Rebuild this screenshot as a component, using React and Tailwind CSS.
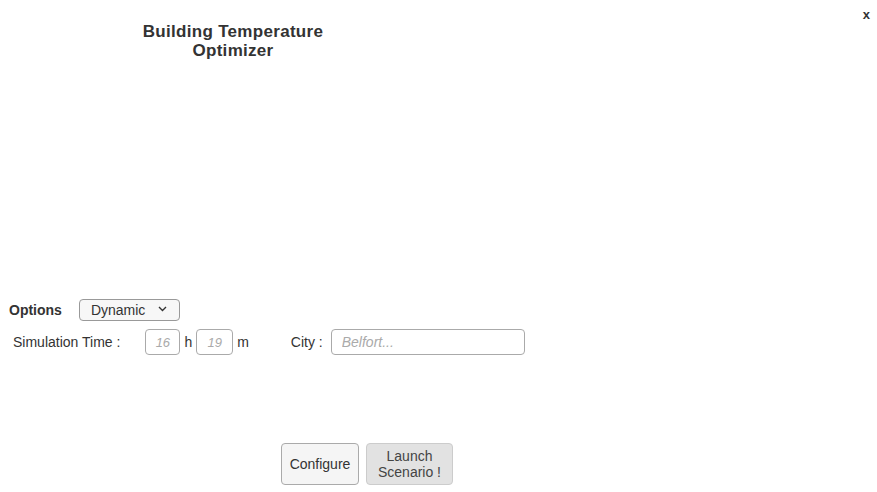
import React, { useState } from 'react';

const App = () => {
    const [mode, setMode] = useState('Dynamic');

    return (
        <div className="relative w-[877px] h-[492px] bg-white text-[#333] font-['Liberation_Sans',Arial,sans-serif]">
            <button className="absolute right-[7px] top-[5px] text-[13px] font-bold text-[#333]">x</button>

            <div className="w-[466px] pt-[22px] text-center text-[17px] tracking-[0.3px] font-bold leading-[19px] text-[#333]">
                <div>Building Temperature</div>
                <div>Optimizer</div>
            </div>

            <div className="mt-[238px] pl-[9px]">
                <div className="flex items-center h-[24px]">
                    <span className="text-[14px] font-bold">Options</span>
                    <div className="ml-[17px] relative">
                        <select
                            value={mode}
                            onChange={(e) => setMode(e.target.value)}
                            className="appearance-none w-[101px] h-[22px] pl-[11px] border border-[#999] rounded-[4px] bg-[#f7f7f7] text-[14px] text-[#333]"
                        >
                            <option>Dynamic</option>
                            <option>Static</option>
                        </select>
                        <svg className="absolute right-[13px] top-[8px] pointer-events-none" width="9" height="6" viewBox="0 0 9 6">
                            <path d="M1 1l3.5 3.5L8 1" fill="none" stroke="#333" strokeWidth="1.4" />
                        </svg>
                    </div>
                </div>

                <div className="flex items-center mt-[6px] h-[28px] text-[14px]">
                    <span className="ml-[4px]">Simulation Time :</span>
                    <input placeholder="16" className="ml-[25px] w-[35px] h-[26px] border border-[#aaa] rounded-[4px] text-center italic placeholder:text-[#aaa] text-[13px]" />
                    <span className="ml-[4px]">h</span>
                    <input placeholder="19" className="ml-[4px] w-[37px] h-[26px] border border-[#aaa] rounded-[4px] text-center italic placeholder:text-[#aaa] text-[13px]" />
                    <span className="ml-[4px]">m</span>
                    <span className="ml-[42px]">City :</span>
                    <input placeholder="Belfort..." className="ml-[8px] w-[194px] h-[26px] border border-[#aaa] rounded-[4px] pl-[10px] italic placeholder:text-[#aaa] text-[14px]" />
                </div>
            </div>

            <div className="flex mt-[87px] pl-[281px] gap-[7px]">
                <button className="w-[78px] h-[42px] border border-[#aaa] rounded-[4px] bg-[#f5f5f5] text-[14px] text-[#333]">
                    Configure
                </button>
                <button className="w-[87px] h-[42px] border border-[#ccc] rounded-[4px] bg-[#e2e2e2] text-[14px] text-[#444] leading-[16px]">
                    Launch<br />Scenario !
                </button>
            </div>
        </div>
    );
};

export default App;
